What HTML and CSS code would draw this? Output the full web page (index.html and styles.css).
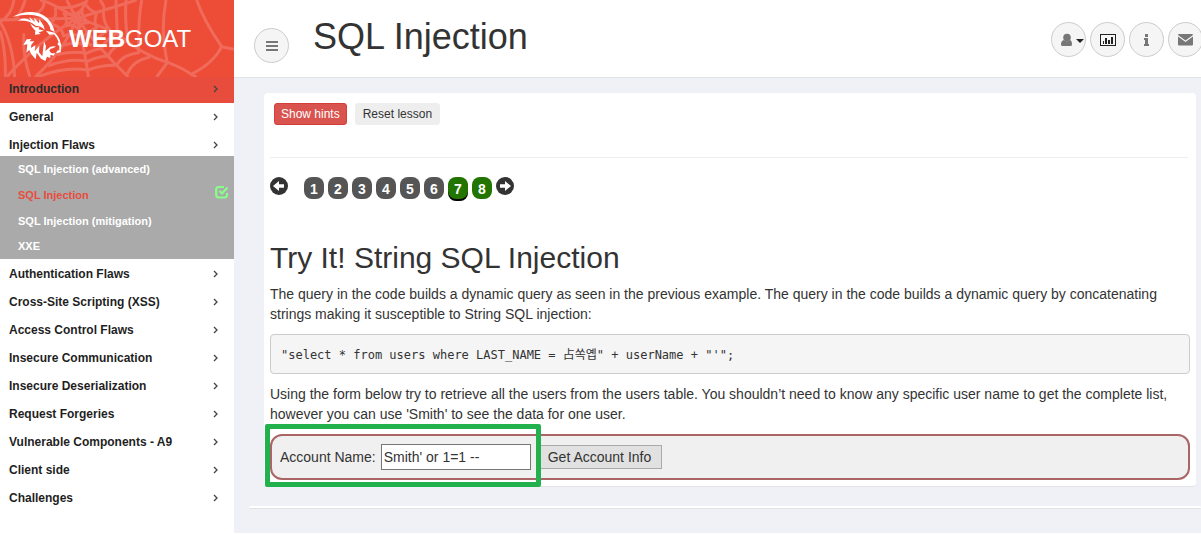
FILE: index.html
```html
<!DOCTYPE html>
<html lang="en">
<head>
<meta charset="utf-8">
<title>WebGoat</title>
<link rel="stylesheet" href="styles.css">
</head>
<body>
<div class="app">
  <aside class="sidebar">
    <a class="brand" href="#">
      <svg class="brand-art" viewBox="0 0 702 231" preserveAspectRatio="xMinYMin slice" aria-hidden="true">
        <g class="web">
          <path d="M230 55L0 60M230 55Q150 5 120 0M230 55Q210 20 200 0M230 55L262 0M230 55Q330 25 410 0M230 55Q320 80 370 115Q430 165 505 188Q550 205 575 224L590 231M230 55Q300 150 385 231M230 55Q255 150 265 231M230 55Q195 150 105 231M230 55Q120 120 20 231"/>
          <path d="M190 38Q225 52 246 28Q244 52 266 68Q238 68 236 88Q220 70 196 78Q206 58 190 38M165 22Q215 28 254 8Q266 32 290 38Q280 66 290 84Q262 94 248 112Q224 98 190 108Q188 80 152 72Q174 48 165 22"/>
          <path d="M130 0Q138 24 108 42M300 0Q318 24 310 32Q310 70 328 88Q296 108 284 126M276 137Q260 126 253 134Q220 124 192 136M348 0Q350 62 352 100Q316 118 304 146Q280 148 260 160Q220 152 172 164M378 0Q374 68 384 120Q340 136 324 168Q292 170 262 184Q208 174 144 198M425 0Q414 62 416 158Q366 164 350 196Q306 194 264 210Q194 198 112 231M498 0C484 75 490 130 502 188L470 231M450 172Q400 180 382 222"/>
          <path d="M590 0Q610 60 665 140L702 148M665 140Q640 190 575 222M0 65Q34 48 42 0M0 65Q40 130 44 231M72 100Q66 160 90 231M46 60Q66 32 76 0M0 92Q18 150 16 231"/>
        </g>
        <g class="goat">
          <path d="M38 50Q66 34 98 36Q135 40 152 66Q162 82 164 96L152 90Q148 64 120 50Q88 38 38 50Z"/>
          <path d="M54 62Q72 49 92 62L88 51L104 65L103 53L117 70L118 58L131 77L134 90Q122 76 108 78Q88 60 54 62Z"/>
          <path d="M90 70Q96 84 106 92L105 104L122 102L116 97L132 92L116 88L118 82L106 82Z"/>
          <path d="M138 92L164 98Q178 110 181 127L184 135L182 157L168 160L172 152L178 151L178 139L172 132L176 127L170 113L162 103L148 104Z"/>
          <path d="M70 135L80 118L94 117L89 124L103 124L94 134L93 144L106 135L104 154L118 137L117 157L127 169L132 124L138 139L136 153L151 140L168 138L161 144L152 146L148 152L154 160L166 160L160 167L151 164L151 174L141 170L136 183L123 176L110 158L107 178L94 163L88 150L79 158L82 133Z"/>
        </g>
      </svg>
      <span class="brand-name"><b>WEB</b>GOAT</span>
    </a>
    <nav class="menu">
      <a class="item current" href="#">Introduction<svg class="chev" viewBox="0 0 6 8"><path d="M1 1l3 3-3 3"/></svg></a>
      <a class="item" href="#">General<svg class="chev" viewBox="0 0 6 8"><path d="M1 1l3 3-3 3"/></svg></a>
      <a class="item open" href="#">Injection Flaws<svg class="chev" viewBox="0 0 6 8"><path d="M1 1l3 3-3 3"/></svg></a>
      <div class="submenu">
        <a class="subitem" href="#">SQL Injection (advanced)</a>
        <a class="subitem selected" href="#">SQL Injection
          <svg class="done" viewBox="0 0 14 14"><path d="M9 2H4Q1.200 2 1.200 4.500V10Q1.200 12.500 4 12.500H9.500Q12 12.500 12 10V8"/><path d="M4.500 6l2.500 2.500L12.500 2.500"/></svg></a>
        <a class="subitem" href="#">SQL Injection (mitigation)</a>
        <a class="subitem" href="#">XXE</a>
      </div>
      <a class="item" href="#">Authentication Flaws<svg class="chev" viewBox="0 0 6 8"><path d="M1 1l3 3-3 3"/></svg></a>
      <a class="item" href="#">Cross-Site Scripting (XSS)<svg class="chev" viewBox="0 0 6 8"><path d="M1 1l3 3-3 3"/></svg></a>
      <a class="item" href="#">Access Control Flaws<svg class="chev" viewBox="0 0 6 8"><path d="M1 1l3 3-3 3"/></svg></a>
      <a class="item" href="#">Insecure Communication<svg class="chev" viewBox="0 0 6 8"><path d="M1 1l3 3-3 3"/></svg></a>
      <a class="item" href="#">Insecure Deserialization<svg class="chev" viewBox="0 0 6 8"><path d="M1 1l3 3-3 3"/></svg></a>
      <a class="item" href="#">Request Forgeries<svg class="chev" viewBox="0 0 6 8"><path d="M1 1l3 3-3 3"/></svg></a>
      <a class="item" href="#">Vulnerable Components - A9<svg class="chev" viewBox="0 0 6 8"><path d="M1 1l3 3-3 3"/></svg></a>
      <a class="item" href="#">Client side<svg class="chev" viewBox="0 0 6 8"><path d="M1 1l3 3-3 3"/></svg></a>
      <a class="item" href="#">Challenges<svg class="chev" viewBox="0 0 6 8"><path d="M1 1l3 3-3 3"/></svg></a>
    </nav>
  </aside>
  <div class="main">
    <header class="topbar">
      <button class="round toggle" type="button" aria-label="Toggle menu"><svg width="14" height="12" viewBox="0 0 14 12"><path d="M1 1h12v2H1zM1 5h12v2H1zM1 9h12v2H1z"/></svg></button>
      <h1 class="title">SQL Injection</h1>
      <div class="tools">
        <button class="round user" type="button" aria-label="User menu"><svg width="24" height="14" viewBox="0 0 24 14"><circle cx="7" cy="4.500" r="3.800"/><path d="M4 7Q1 7.500 1 11.500Q1 13 2.500 13h8Q12 13 12 11.500Q12 7.500 10 7Q7 9.500 4 7z"/><path class="dark" d="M16 6h8l-4 4z"/></svg></button>
        <button class="round" type="button" aria-label="Report card"><svg class="dark" width="16" height="14" viewBox="0 0 16 14"><path fill-rule="evenodd" d="M0 1h16v12H0zM1 2v10h14V2z"/><path d="M3 8h1v3H3zM5 5h2v6H5zM8 7h2v4H8zM11 4h2v7h-2z"/></svg></button>
        <button class="round" type="button" aria-label="About"><svg width="6" height="12" viewBox="0 0 6 12"><path d="M1 0h3v3H1zM0 4h4v6h1v2H0v-2h1V6H0z"/></svg></button>
        <button class="round" type="button" aria-label="Contact"><svg width="15" height="12" viewBox="0 0 15 12"><path d="M1 0h13q1 0 1 1L7.500 6.500L0 1Q0 0 1 0zM0 2.500L7.500 8L15 2.500V10.500q0 1-1 1H1q-1 0-1-1z"/></svg></button>
      </div>
    </header>
    <main class="content">
      <section class="card">
        <div class="actions">
          <button class="btn danger" type="button">Show hints</button>
          <button class="btn" type="button">Reset lesson</button>
        </div>
        <nav class="pager" aria-label="Lesson pages">
          <a class="arrow" href="#" aria-label="Previous"><svg viewBox="0 0 18 18"><circle cx="9" cy="9" r="9"/><path d="M3 9l6-5v3.200h5v3.600H9V14z"/></svg></a>
          <div class="pages">
            <a class="page" href="#">1</a><a class="page" href="#">2</a><a class="page" href="#">3</a><a class="page" href="#">4</a><a class="page" href="#">5</a><a class="page" href="#">6</a><a class="page solved here" href="#">7</a><a class="page solved" href="#">8</a>
          </div>
          <a class="arrow" href="#" aria-label="Next"><svg viewBox="0 0 18 18"><circle cx="9" cy="9" r="9"/><path d="M15 9l-6-5v3.200H4v3.600h5V14z"/></svg></a>
        </nav>
        <h2 class="heading">Try It! String SQL Injection</h2>
        <p class="text">The query in the code builds a dynamic query as seen in the previous example. The query in the code builds a dynamic query by concatenating strings making it susceptible to String SQL injection:</p>
        <pre class="code">"select * from users where LAST_NAME = 占쏙옙" + userName + "'";</pre>
        <p class="text">Using the form below try to retrieve all the users from the users table. You shouldn’t need to know any specific user name to get the complete list, however you can use 'Smith' to see the data for one user.</p>
        <form class="attack">
          <label for="account">Account Name:</label>
          <input class="field" id="account" type="text" value="Smith' or 1=1 --">
          <button class="submit" type="button">Get Account Info</button>
          <span class="marker"></span>
        </form>
      </section>
      <div class="strip"></div>
    </main>
  </div>
</div>
</body>
</html>
```
FILE: styles.css
```css
* { box-sizing: border-box; }
body {
  margin: 0;
  background: #fff;
  color: #333;
  font: 14px/20px "Liberation Sans", Arial, sans-serif;
}
a { color: inherit; text-decoration: none; }
button, input { font-family: inherit; color: inherit; margin: 0; }
.app { display: flex; min-height: calc(100vh - 2px); }

.sidebar { flex: 0 0 234px; background: #fff; }
.brand {
  display: flex;
  align-items: center;
  position: relative;
  height: 77px;
  padding-left: 69px;
  background: #ed4c37;
  overflow: hidden;
}
.brand-art { position: absolute; inset: 0; width: 100%; height: 100%; }
.web { fill: none; stroke: #f06b5b; stroke-width: 9; stroke-linejoin: round; }
.goat { fill: #fff; }
.brand-name { position: relative; color: #fff; font-size: 24px; line-height: 28px; }

.item {
  display: flex;
  align-items: center;
  justify-content: space-between;
  height: 28px;
  padding: 0 15px 0 9px;
  color: #1f1f1f;
  font-size: 12px;
  font-weight: bold;
}
.item.current { height: 26px; padding-bottom: 2px; background: #e84c3d; color: #2b2b2b; }
.item.open { height: 25px; padding-top: 2px; }
.chev { width: 6px; height: 8px; fill: none; stroke: #444; stroke-width: 1.3; }
.submenu { padding-bottom: 1px; margin-bottom: 1px; background: #aaa; }
.subitem {
  display: flex;
  align-items: center;
  justify-content: space-between;
  height: 26px;
  padding: 0 5px 0 18px;
  color: #fff;
  font-size: 11px;
  font-weight: bold;
}
.subitem:nth-child(n+3) { height: 25px; }
.subitem.selected { color: #e84c3d; }
.done { width: 14px; height: 14px; margin-bottom: 6px; fill: none; stroke: #8f8; stroke-width: 2.2; }

.main { flex: 1; min-width: 0; background: #f0f1f7; }
.topbar {
  display: flex;
  align-items: flex-start;
  height: 78px;
  padding-left: 20px;
  border-bottom: 1px solid #e2e3e7;
  background: #fff;
  overflow: hidden;
}
.round {
  display: flex;
  align-items: center;
  justify-content: center;
  flex: none;
  width: 35px;
  height: 35px;
  padding: 0;
  border: 1px solid #ccc;
  border-radius: 50%;
  background: #f5f5f5;
  fill: #777;
}
.round.user { padding-left: 6px; }
.round .dark, svg.dark { fill: #222; }
.toggle { margin-top: 28px; }
.title { margin: 17px 0 0 24px; font-size: 36px; line-height: 40px; font-weight: normal; }
.tools { display: flex; gap: 4px; margin: 22px -2px 0 auto; }

.content { padding: 15px 0 0 15px; }
.card {
  margin: 0 5px 19px 15px;
  padding: 10px 6px 6px;
  border-bottom: 1px solid #e2e3e7;
  border-radius: 4px;
  background: #fff;
}
.actions {
  display: flex;
  gap: 8px;
  margin: 0 2px 0 0;
  padding: 0 0 32px 4px;
  border-bottom: 1px solid #eee;
}
.btn {
  height: 22px;
  padding: 0 7px;
  border: 1px solid #eee;
  border-radius: 3px;
  background: #eee;
  font-size: 12px;
  line-height: 20px;
}
.btn.danger { padding: 0 6px; border-color: #d43f3a; background: #d9534f; color: #fff; }
.pager { display: flex; gap: 4px; margin-top: 19px; }
.arrow svg { display: block; width: 18px; height: 18px; fill: #333; }
.arrow path { fill: #fff; }
.pages { display: flex; gap: 4px; margin-left: 12px; }
.page {
  width: 20px;
  height: 22px;
  padding-top: 2px;
  border-radius: 8px;
  background: #555;
  color: #fff;
  font-weight: bold;
  text-align: center;
}
.page.solved { background: #217500; }
.page.here { box-shadow: 0 2px 0 #000; }
.heading { margin: 42px 0 10px; font-size: 30px; line-height: 33px; font-weight: normal; }
.text { margin: 0 0 10px; }
.code {
  margin: 0 0 10px;
  padding: 10px 10px 8px;
  border: 1px solid #ccc;
  border-radius: 4px;
  background: #f5f5f5;
  font: 12px/20px "DejaVu Sans Mono", "Noto Sans CJK KR", monospace;
  white-space: pre-wrap;
}
.attack {
  display: flex;
  align-items: center;
  position: relative;
  height: 46px;
  padding-left: 8px;
  border: 2px solid #a66;
  border-radius: 12px;
  background: #f0f0f0;
}
.field {
  width: 150px;
  height: 26px;
  margin: 0 6px 0 5px;
  padding: 0 2px;
  border: 1px solid #767676;
  background: #fff;
  font-size: 14px;
}
.submit {
  height: 24px;
  padding: 0 10px;
  border: 1px solid #aaa;
  background: #e1e1e1;
  font-size: 14px;
}
.marker {
  position: absolute;
  inset: -12px auto -9px -7px;
  width: 276px;
  border: 5px solid #22b14c;
  border-radius: 2px;
  pointer-events: none;
}
.card, .text, .code { overflow-wrap: break-word; }
.strip { height: 3px; border-bottom: 1px solid #e2e3e7; border-radius: 2px; background: #fff; }
```
